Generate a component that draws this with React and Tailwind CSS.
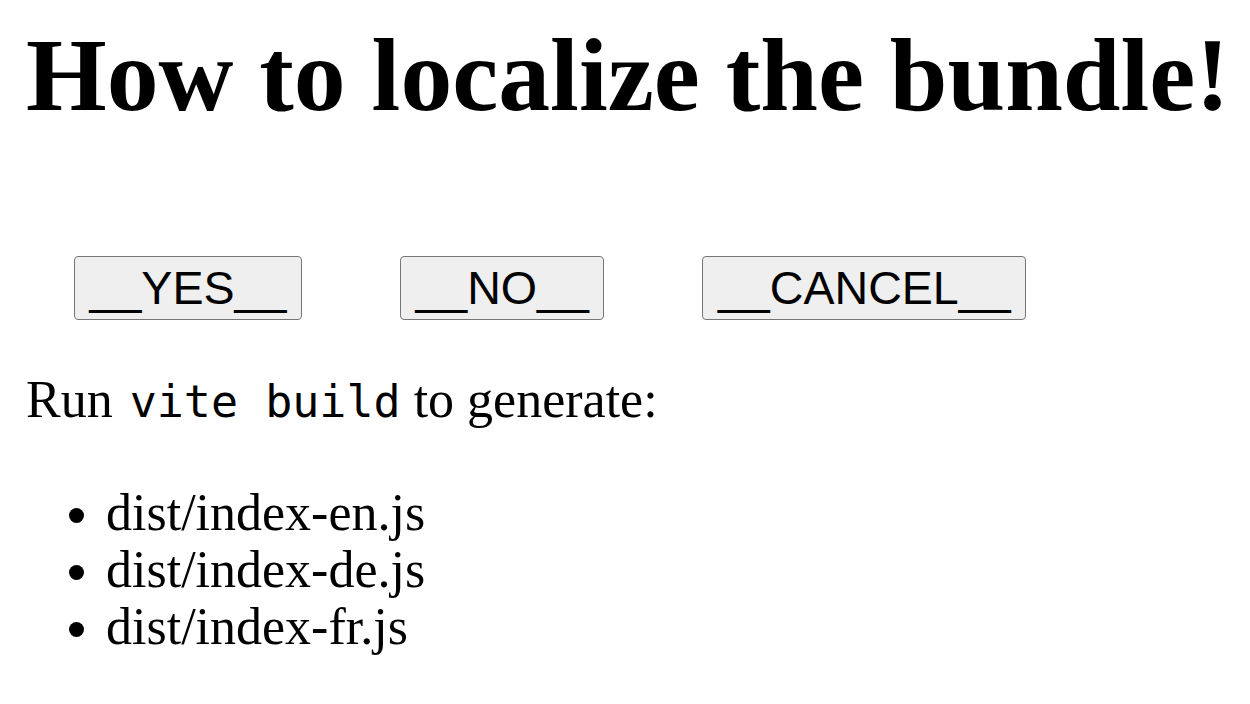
export default function App() {
  const serif = { fontFamily: '"Liberation Serif", "Times New Roman", serif' };
  const btn =
    "h-[64px] px-[14.5px] border border-[#767676] rounded-[4px] bg-[#efefef] text-black text-[46.6px] leading-none flex items-center";
  return (
    <div className="bg-white min-h-[704px] pl-[26px] text-black" style={serif}>
      <h1 className="pt-[18px] text-[103.7px] font-bold leading-[114px] whitespace-nowrap">
        How to localize the bundle!
      </h1>
      <div className="mt-[124px] flex gap-[98px] pl-[48px]" style={{ fontFamily: '"Liberation Sans", Arial, sans-serif' }}>
        <button className={btn}>__YES__</button>
        <button className={btn}>__NO__</button>
        <button className={btn}>__CANCEL__</button>
      </div>
      <p className="mt-[51px] text-[52px] leading-[57px]">
        Run{" "}
        <code className="ml-[4px] text-[45px] leading-[0]" style={{ fontFamily: '"DejaVu Sans Mono", monospace' }}>
          vite build
        </code>{" "}
        to generate:
      </p>
      <ul className="mt-[56px] list-disc pl-[80px] text-[52px] leading-[57px]">
        <li>dist/index-en.js</li>
        <li>dist/index-de.js</li>
        <li>dist/index-fr.js</li>
      </ul>
    </div>
  );
}
